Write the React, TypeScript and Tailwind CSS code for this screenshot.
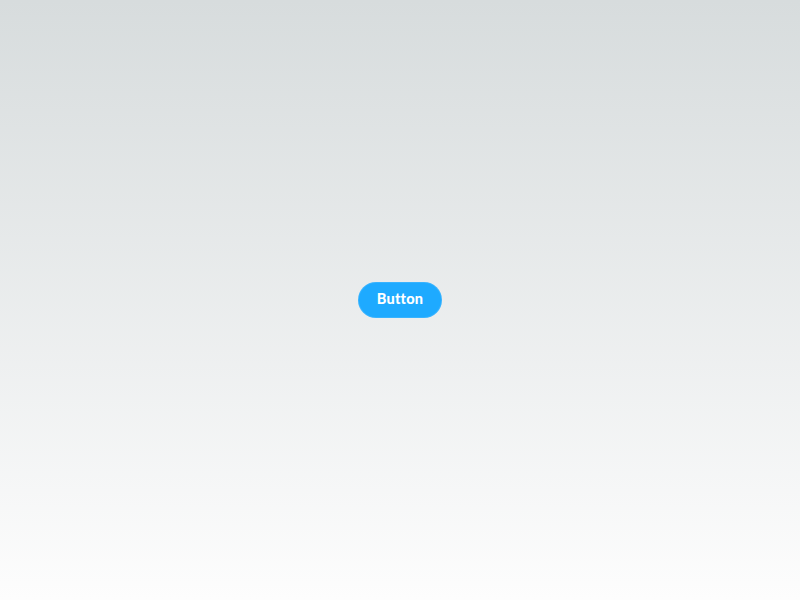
export default function App() {
  return (
    <div className="w-full h-[600px] bg-gradient-to-b from-[#d7dcdd] to-[#fdfdfd] flex items-center justify-center">
      <button
        className="h-9 w-[84px] rounded-full bg-[#1eaaff] text-white text-[14.5px] font-black leading-none pb-[1px] tracking-[0.2px] border border-[#5cc0ff]/40"
        style={{ fontFamily: 'Lato, "Open Sans", sans-serif' }}
      >
        Button
      </button>
    </div>
  );
}
